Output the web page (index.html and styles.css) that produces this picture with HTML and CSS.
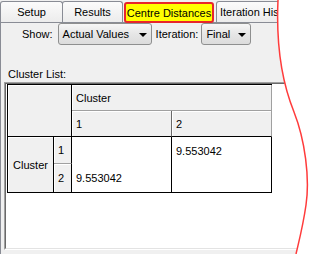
FILE: index.html
```html
<!DOCTYPE html>
<html>
<head>
    <title>Cluster Centre Distances</title>
    <link rel="stylesheet" href="styles.css">
</head>
<body>
    <div class="window">
        <div class="tabs">
            <div class="tab tab-setup">Setup</div>
            <div class="tab tab-results">Results</div>
            <div class="tab tab-active">Centre Distances</div>
            <div class="tab tab-history">Iteration History</div>
        </div>
        <div class="panel">
            <div class="toolbar">
                <span class="label">Show:</span>
                <div class="combo combo-show"><span>Actual Values</span><span class="arrow"></span></div>
                <span class="label label-iter">Iteration:</span>
                <div class="combo combo-iter"><span>Final</span><span class="arrow"></span></div>
            </div>
            <div class="list-label">Cluster List:</div>
            <div class="grid-frame">
                <div class="grid-inner">
                    <div class="grid">
                        <div class="cell head corner"></div>
                        <div class="cell head col-group">Cluster</div>
                        <div class="cell head col-1">1</div>
                        <div class="cell head col-2">2</div>
                        <div class="cell head row-group">Cluster</div>
                        <div class="cell head row-1">1</div>
                        <div class="cell data"></div>
                        <div class="cell data">9.553042</div>
                        <div class="cell head row-2">2</div>
                        <div class="cell data last">9.553042</div>
                        <div class="cell data last"></div>
                    </div>
                </div>
            </div>
        </div>
    </div>

    <svg class="tear" width="316" height="254" viewBox="0 0 316 254">
        <path d="M278,0 C276,45 281,80 294,112 C305,140 310,178 306,205 C303,226 299,241 296,254 L316,254 L316,0 Z" fill="#fff"/>
        <path d="M278,0 C276,45 281,80 294,112 C305,140 310,178 306,205 C303,226 299,241 296,254" fill="none" stroke="#ff3b3b" stroke-width="1.5"/>
    </svg>
</body>
</html>
```

FILE: styles.css
```css
html, body {
    margin: 0;
    width: 316px;
    height: 254px;
    overflow: hidden;
    background-color: #f0f0f0;
}
body {
    position: relative;
    font-family: "Liberation Sans", Arial, sans-serif;
    font-size: 11px;
    color: #000;
}
.window {
    height: 254px;
    display: flex;
    flex-direction: column;
}

/* tab strip */
.tabs {
    display: flex;
    align-items: flex-end;
    height: 22px;
}
.tab {
    box-sizing: border-box;
    height: 21px;
    display: flex;
    align-items: center;
    justify-content: center;
    border: 1px solid #898c95;
    border-bottom: none;
    border-radius: 3px 3px 0 0;
    background: linear-gradient(#fbfbfb, #ececec);
    white-space: nowrap;
    overflow: hidden;
}
.tab-setup {
    width: 63px;
}
.tab-results {
    width: 61px;
    margin-left: -1px;
}
.tab-active {
    width: 90px;
    height: 21px;
    margin-left: 1px;
    margin-bottom: -1px;
    border: 2px solid #e8262b;
    border-radius: 3px;
    background: #ffff00;
    position: relative;
}
.tab-history {
    width: 90px;
    margin-left: 2px;
    justify-content: flex-start;
    padding-left: 3px;
}

/* panel */
.panel {
    flex: 1;
    border-top: 1px solid #898c95;
    border-left: 1px solid #898c95;
    display: flex;
    flex-direction: column;
}
.toolbar {
    display: flex;
    align-items: center;
    height: 22px;
    padding-left: 21px;
}
.combo {
    box-sizing: border-box;
    height: 22px;
    display: flex;
    align-items: center;
    justify-content: space-between;
    padding: 0 4px 0 4px;
    border: 1px solid #8e8f8f;
    border-radius: 3px;
    background: linear-gradient(#f6f6f6, #e6e6e6 50%, #dcdcdc);
}
.combo-show {
    width: 94px;
    margin-left: 5px;
}
.label-iter {
    margin-left: 4px;
}
.combo-iter {
    width: 50px;
    margin-left: 3px;
}
.arrow {
    width: 0;
    height: 0;
    border-top: 4px solid #000;
    border-left: 4px solid transparent;
    border-right: 4px solid transparent;
    margin-top: 1px;
}
.list-label {
    padding-left: 7px;
    margin-top: 22px;
    line-height: 14px;
}

/* grid */
.grid-frame {
    box-sizing: border-box;
    width: 308px;
    height: 168px;
    margin-left: 3px;
    margin-top: 1px;
    border: 1px solid;
    border-color: #a0a0a0 #fff #fff #a0a0a0;
}
.grid-inner {
    box-sizing: border-box;
    height: 100%;
    padding-left: 1px;
    border: 1px solid;
    border-color: #696969 #e3e3e3 #e3e3e3 #696969;
    background-color: #fff;
}
.grid {
    display: grid;
    grid-template-columns: 46px 18px 100px 100px;
    grid-template-rows: 26px 26px 27px 29px;
    width: fit-content;
    border-left: 1px solid #000;
    border-top: 1px solid #000;
}
.cell {
    box-sizing: border-box;
    display: flex;
    align-items: center;
    padding-left: 4px;
    border-right: 1px solid #000;
}
.head {
    background-color: #f0f0f0;
    box-shadow: inset 1px 1px #fff;
}
.corner {
    grid-column: 1 / 3;
    grid-row: 1 / 3;
    border-bottom: 1px solid #000;
}
.col-group {
    grid-column: 3 / 5;
    border-right-color: #a0a0a0;
    border-bottom: 1px solid #a0a0a0;
}
.col-1 {
    border-right-color: #696969;
    border-bottom: 1px solid #000;
}
.col-2 {
    border-right-color: #a0a0a0;
    border-bottom: 1px solid #000;
}
.row-group {
    grid-column: 1;
    grid-row: 3 / 5;
    justify-content: center;
    padding-left: 0;
    border-bottom: 1px solid #000;
}
.row-1 {
    border-bottom: 1px solid #a0a0a0;
}
.row-2 {
    border-bottom: 1px solid #000;
}
.data {
    background-color: #fff;
}
.data.last {
    border-bottom: 1px solid #000;
}

/* torn edge of the screenshot */
.tear {
    position: absolute;
    left: 0;
    top: 0;
    pointer-events: none;
}
```
